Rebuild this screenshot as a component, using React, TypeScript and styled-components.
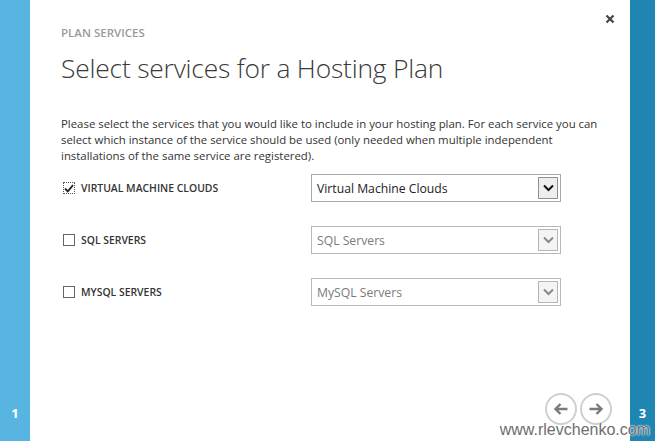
import React from "react";
import styled, { createGlobalStyle } from "styled-components";

const GlobalStyle = createGlobalStyle`
  html, body {
    margin: 0;
    padding: 0;
    background: #ffffff;
  }
  body {
    font-family: "Open Sans", "Noto Sans", sans-serif;
    color: #333333;
  }
`;

const Frame = styled.div`
  position: relative;
  display: flex;
  width: 655px;
  height: 441px;
  overflow: hidden;
`;

const Strip = styled.div<{ $color: string; $width: number }>`
  width: ${(p) => p.$width}px;
  flex: 0 0 auto;
  background: ${(p) => p.$color};
  display: flex;
  flex-direction: column;
  justify-content: flex-end;
  align-items: center;
  padding-bottom: 20px;
  box-sizing: border-box;
`;

const StepNumber = styled.span`
  color: #ffffff;
  font-family: "Open Sans", sans-serif;
  font-weight: 700;
  font-size: 13px;
  line-height: 16px;
`;

const Main = styled.div`
  position: relative;
  flex: 1 1 auto;
  display: flex;
  flex-direction: column;
  padding: 26px 18px 16px 31px;
  box-sizing: border-box;
`;

const CloseButton = styled.div`
  position: absolute;
  top: 13px;
  right: 14px;
  width: 12px;
  height: 12px;
  display: flex;
  align-items: center;
  justify-content: center;
`;

const Eyebrow = styled.div`
  font-size: 11.5px;
  line-height: 14px;
  font-weight: 600;
  color: #9a9a9a;
`;

const Title = styled.h1`
  margin: 10px 0 0;
  font-size: 26.4px;
  line-height: 36px;
  font-weight: 300;
  color: #3a3a3a;
  letter-spacing: -0.2px;
`;

const Description = styled.p`
  margin: 30px 0 0;
  font-size: 11.4px;
  line-height: 16px;
  color: #333333;
`;

const Services = styled.div`
  margin-top: 10px;
  display: flex;
  flex-direction: column;
  gap: 24px;
`;

const ServiceRow = styled.div`
  display: flex;
  align-items: center;
  height: 28px;
`;

const CheckLabel = styled.label`
  width: 250px;
  display: flex;
  align-items: center;
  gap: 6px;
  padding-left: 2px;
  box-sizing: border-box;
  font-size: 10.4px;
  font-weight: 600;
  color: #333333;
`;

const Box = styled.span<{ $focused: boolean }>`
  width: 12px;
  height: 12px;
  box-sizing: border-box;
  border: 1px ${(p) => (p.$focused ? "dotted #555" : "solid #666")};
  display: flex;
  align-items: center;
  justify-content: center;
  background: #fff;
`;

const Select = styled.div<{ $disabled: boolean }>`
  width: 250px;
  height: 28px;
  box-sizing: border-box;
  border: 1px solid ${(p) => (p.$disabled ? "#b8b8b8" : "#a8a8a8")};
  display: flex;
  align-items: center;
  justify-content: space-between;
  padding: 2px 2px 2px 5px;
  font-size: 12.2px;
  color: ${(p) => (p.$disabled ? "#7a7a7a" : "#222222")};
`;

const DropButton = styled.span<{ $disabled: boolean }>`
  width: 20px;
  height: 22px;
  box-sizing: border-box;
  border: 1px solid ${(p) => (p.$disabled ? "#b5b5b5" : "#8f8f8f")};
  background: ${(p) => (p.$disabled ? "#f4f4f4" : "#eeeeee")};
  display: flex;
  align-items: center;
  justify-content: center;
`;

const Nav = styled.div`
  margin-top: auto;
  display: flex;
  justify-content: flex-end;
  gap: 3px;
`;

const RoundButton = styled.div`
  width: 32px;
  height: 32px;
  box-sizing: border-box;
  border: 2px solid #cfcfcf;
  border-radius: 50%;
  display: flex;
  align-items: center;
  justify-content: center;
`;

const Watermark = styled.div`
  position: absolute;
  right: 5px;
  bottom: 2px;
  font-family: "Liberation Sans", Arial, sans-serif;
  font-size: 16px;
  line-height: 18px;
  color: #6e6e6e;
  text-shadow: 0 0 2px #ffffff, 0 0 2px #ffffff;
`;

const Chevron = ({ color }: { color: string }) => (
  <svg width="11" height="8" viewBox="0 0 11 8">
    <path d="M1 1.5 L5.5 6 L10 1.5" fill="none" stroke={color} strokeWidth="2" />
  </svg>
);

const services = [
  { label: "VIRTUAL MACHINE CLOUDS", value: "Virtual Machine Clouds", checked: true },
  { label: "SQL SERVERS", value: "SQL Servers", checked: false },
  { label: "MYSQL SERVERS", value: "MySQL Servers", checked: false },
];

const App = () => {
  return (
    <Frame>
      <GlobalStyle />
      <Strip $color="#58b5e1" $width={30}>
        <StepNumber>1</StepNumber>
      </Strip>
      <Main>
        <CloseButton>
          <svg width="10" height="10" viewBox="0 0 10 10">
            <path d="M1.5 1.5 L8.5 8.5 M8.5 1.5 L1.5 8.5" stroke="#444" strokeWidth="2.2" />
          </svg>
        </CloseButton>
        <Eyebrow>PLAN SERVICES</Eyebrow>
        <Title>Select services for a Hosting Plan</Title>
        <Description>
          Please select the services that you would like to include in your hosting plan. For each service you can
          <br />
          select which instance of the service should be used (only needed when multiple independent
          <br />
          installations of the same service are registered).
        </Description>
        <Services>
          {services.map((s) => (
            <ServiceRow key={s.label}>
              <CheckLabel>
                <Box $focused={s.checked}>
                  {s.checked && (
                    <svg width="10" height="9" viewBox="0 0 10 9">
                      <path d="M1 4.5 L3.8 7.3 L9 1.2" fill="none" stroke="#222" strokeWidth="1.8" />
                    </svg>
                  )}
                </Box>
                {s.label}
              </CheckLabel>
              <Select $disabled={!s.checked}>
                {s.value}
                <DropButton $disabled={!s.checked}>
                  <Chevron color={s.checked ? "#111" : "#888"} />
                </DropButton>
              </Select>
            </ServiceRow>
          ))}
        </Services>
        <Nav>
          <RoundButton>
            <svg width="16" height="14" viewBox="0 0 16 14">
              <path d="M14.5 7 H3 M7.5 2 L2.5 7 L7.5 12" fill="none" stroke="#7a7a7a" strokeWidth="2.4" />
            </svg>
          </RoundButton>
          <RoundButton>
            <svg width="16" height="14" viewBox="0 0 16 14">
              <path d="M1.5 7 H13 M8.5 2 L13.5 7 L8.5 12" fill="none" stroke="#7a7a7a" strokeWidth="2.4" />
            </svg>
          </RoundButton>
        </Nav>
      </Main>
      <Strip $color="#1f86b1" $width={25}>
        <StepNumber>3</StepNumber>
      </Strip>
      <Watermark>www.rlevchenko.com</Watermark>
    </Frame>
  );
};

export default App;
